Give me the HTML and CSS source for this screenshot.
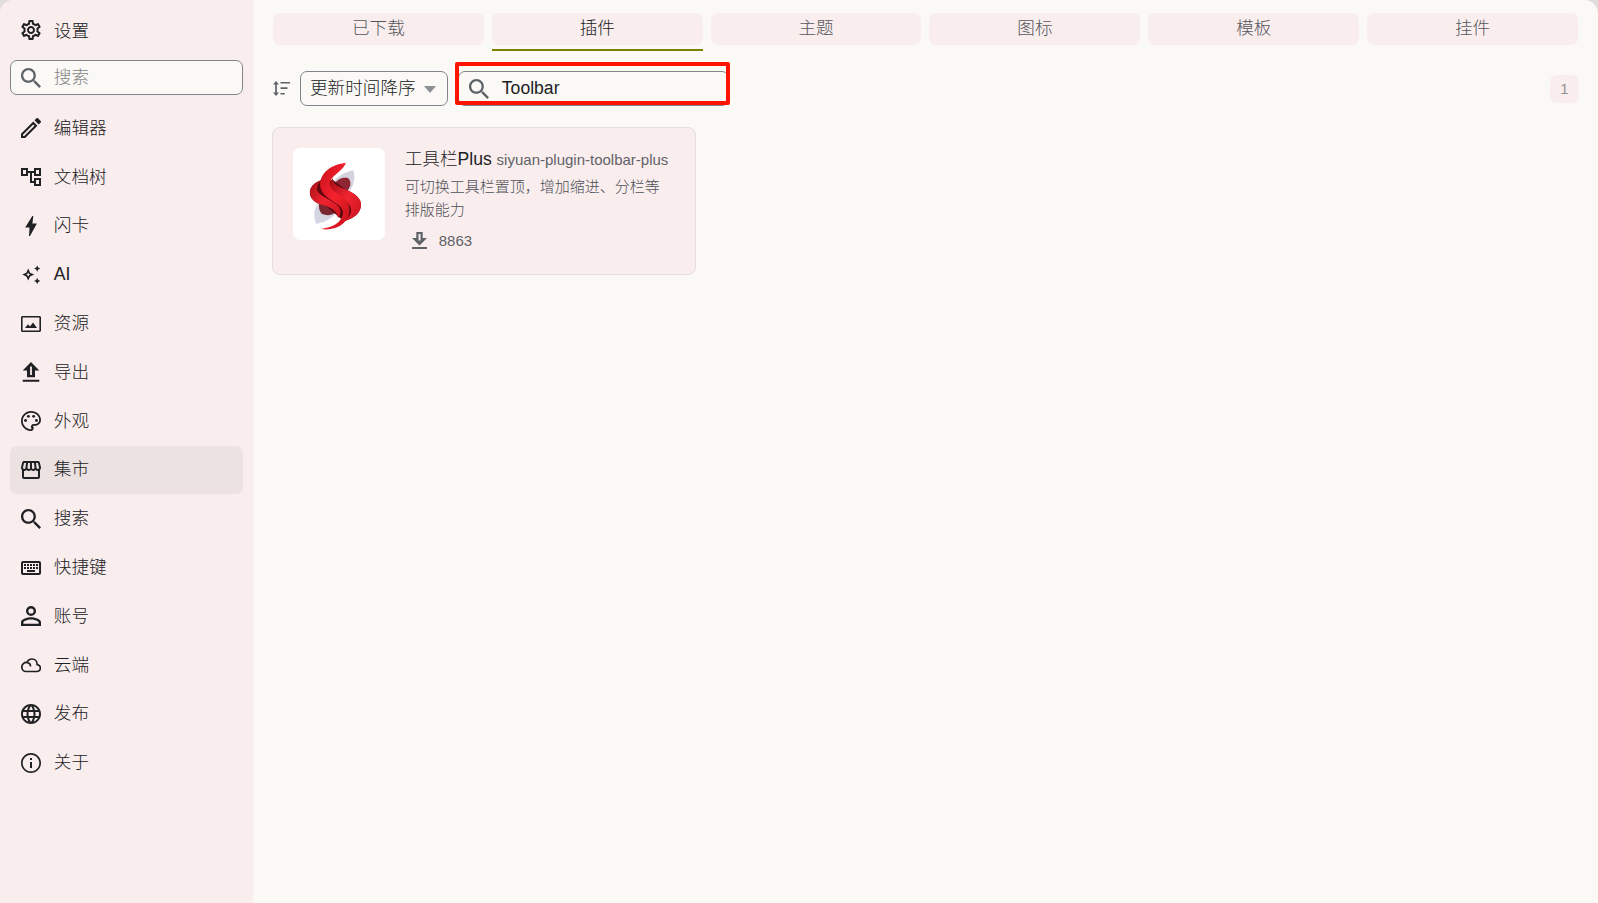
FILE: index.html
```html
<!DOCTYPE html>
<html lang="zh-CN">
<head>
  <meta charset="UTF-8">
  <meta name="viewport" content="width=device-width, initial-scale=1.0">
  <title>设置</title>
  <link rel="stylesheet" href="styles.css">
</head>
<body>
<div class="dialog">
  <aside class="sidebar">
    <div class="side-title">
      <svg class="icon" viewBox="2 2 20 20"><path d="M19.43 12.98c.04-.32.07-.64.07-.98 0-.34-.03-.66-.07-.98l2.11-1.65c.19-.15.24-.42.12-.64l-2-3.46c-.09-.16-.26-.25-.44-.25-.06 0-.12.01-.17.03l-2.49 1c-.52-.4-1.08-.73-1.69-.98l-.38-2.65C14.46 2.18 14.25 2 14 2h-4c-.25 0-.46.18-.49.42l-.38 2.65c-.61.25-1.17.59-1.69.98l-2.49-1c-.06-.02-.12-.03-.18-.03-.17 0-.34.09-.43.25l-2 3.46c-.13.22-.07.49.12.64l2.11 1.65c-.04.32-.07.65-.07.98 0 .33.03.66.07.98l-2.11 1.65c-.19.15-.24.42-.12.64l2 3.46c.09.16.26.25.44.25.06 0 .12-.01.17-.03l2.49-1c.52.4 1.08.73 1.69.98l.38 2.65c.03.24.24.42.49.42h4c.25 0 .46-.18.49-.42l.38-2.65c.61-.25 1.17-.59 1.69-.98l2.49 1c.06.02.12.03.18.03.17 0 .34-.09.43-.25l2-3.46c.12-.22.07-.49-.12-.64l-2.11-1.65zm-1.98-1.71c.04.31.05.52.05.73 0 .21-.02.43-.05.73l-.14 1.13.89.7 1.08.84-.7 1.21-1.27-.51-1.04-.42-.9.68c-.43.32-.84.56-1.25.73l-1.06.43-.16 1.13-.2 1.35h-1.4l-.19-1.35-.16-1.13-1.06-.43c-.43-.18-.83-.41-1.23-.71l-.91-.7-1.06.43-1.27.51-.7-1.21 1.08-.84.89-.7-.14-1.13c-.03-.31-.05-.54-.05-.74s.02-.43.05-.73l.14-1.13-.89-.7-1.08-.84.7-1.21 1.27.51 1.04.42.9-.68c.43-.32.84-.56 1.25-.73l1.06-.43.16-1.13.2-1.35h1.39l.19 1.35.16 1.13 1.06.43c.43.18.83.41 1.23.71l.91.7 1.06-.43 1.27-.51.7 1.21-1.07.85-.89.7.14 1.13zM12 8c-2.21 0-4 1.79-4 4s1.79 4 4 4 4-1.79 4-4-1.79-4-4-4zm0 6c-1.1 0-2-.9-2-2s.9-2 2-2 2 .9 2 2-.9 2-2 2z"/></svg>
      <span>设置</span>
    </div>
    <div class="search-box">
      <svg class="icon" viewBox="3 3 17.5 17.5"><path d="M15.5 14h-.79l-.28-.27C15.41 12.59 16 11.11 16 9.5 16 5.91 13.09 3 9.5 3S3 5.91 3 9.5 5.91 16 9.5 16c1.61 0 3.09-.59 4.23-1.57l.27.28v.79l5 4.99L20.49 19l-4.99-5zm-6 0C7.01 14 5 11.99 5 9.5S7.01 5 9.5 5 14 7.01 14 9.5 11.99 14 9.5 14z"/></svg>
      <span>搜索</span>
    </div>
    <ul class="menu">
      <li>
        <svg class="icon" viewBox="3 3 18 18"><path d="M3 17.25V21h3.75L17.81 9.94l-3.75-3.75L3 17.25zM5.92 19.3H4.8v-1.2l9.2-9.2 1.15 1.15-9.23 9.25zM20.71 5.63l-2.34-2.34c-.39-.39-1.02-.39-1.41 0l-1.83 1.83 3.75 3.75 1.83-1.83c.39-.39.39-1.02 0-1.41z"/></svg>
        <span>编辑器</span>
      </li>
      <li>
        <svg class="icon" viewBox="2 2 20 20"><path d="M22 11V3h-7v3H9V3H2v8h7V8h2v10h4v3h7v-8h-7v3h-2V8h2v3h7zM7 9H4V5h3v4zm10 6h3v4h-3v-4zm0-10h3v4h-3V5z"/></svg>
        <span>文档树</span>
      </li>
      <li>
        <svg class="icon" viewBox="2 2 20 20"><path d="M14.300 2h-1L6.200 13.500h4.300L10 22h1L17.900 9.600h-4.500z"/></svg>
        <span>闪卡</span>
      </li>
      <li>
        <svg class="icon" viewBox="0 0 20 20"><path fill-rule="evenodd" d="M7.200 3.600l1.900 4.100 4.100 1.900-4.100 1.900-1.900 4.100-1.900-4.100-4.100-1.900 4.100-1.900zm0 4l-.7 1.300-1.300.7 1.300.7.7 1.300.7-1.300 1.300-.7-1.300-.7zM16.200.4l1 2.200 2.200 1-2.200 1-1 2.200-1-2.200-2.200-1 2.200-1zM16.200 12.800l1 2.200 2.200 1-2.200 1-1 2.200-1-2.200-2.200-1 2.200-1z"/></svg>
        <span class="latin">AI</span>
      </li>
      <li>
        <svg class="icon" viewBox="0 0 20 20"><path fill-rule="evenodd" d="M18.500 2h-17C.7 2 0 2.700 0 3.500v13c0 .8.700 1.500 1.500 1.500h17c.8 0 1.500-.7 1.500-1.500v-13c0-.8-.7-1.500-1.500-1.500zm-.1 14.400H1.600V3.600h16.800zM4 14h12l-4-5.500-3 4-2-2.300z"/></svg>
        <span>资源</span>
      </li>
      <li>
        <svg class="icon" viewBox="0 0 20 20"><path fill-rule="evenodd" d="M6 15.200h8V8.500h4.300L10 0 1.700 8.500H6zM9.100 4.600h1.800v8.400H9.100zM1.700 17.700h16.600v2.100H1.700z"/></svg>
        <span>导出</span>
      </li>
      <li>
        <svg class="icon" viewBox="2.500 2.500 19 19"><path d="M12 21.500c-5.240 0-9.500-4.260-9.500-9.500S6.760 2.500 12 2.500s9.500 3.810 9.500 8.500c0 3.030-2.470 5.500-5.500 5.500h-1.500c-.5 0-.5.400-.4.700.9 1.500.3 4.300-2.100 4.300zM12 4.200c-4.300 0-7.800 3.500-7.800 7.800s3.500 7.800 7.800 7.800c.5 0 .6-.5.300-1-.9-1.800.2-4 2.200-4H16c2.100 0 3.800-1.700 3.800-3.800 0-3.750-3.500-6.800-7.800-6.800z"/><circle cx="6.800" cy="11.500" r="1.400"/><circle cx="9.500" cy="7.600" r="1.400"/><circle cx="14.500" cy="7.600" r="1.400"/><circle cx="17.200" cy="11.500" r="1.400"/></svg>
        <span>外观</span>
      </li>
      <li class="active">
        <svg class="icon" viewBox="2 2 20 20"><path d="M21.900 8.890l-1.050-4.370c-.22-.9-1-1.520-1.910-1.520H5.050c-.9 0-1.690.63-1.900 1.520L2.100 8.890c-.24 1.020-.02 2.060.62 2.880.08.11.19.19.28.290V19c0 1.100.9 2 2 2h14c1.100 0 2-.9 2-2v-6.940c.09-.09.2-.18.280-.28.640-.82.870-1.870.620-2.890zM18.910 4.990l1.050 4.370c.1.420.01.840-.25 1.170-.14.180-.44.470-.94.470-.61 0-1.140-.49-1.210-1.140L16.980 5l1.930-.01zM13 5h1.960l.54 4.520c.05.390-.07.780-.33 1.070-.22.260-.54.410-.95.410-.67 0-1.220-.59-1.220-1.310V5zM8.490 9.520L9.040 5H11v4.690c0 .72-.55 1.310-1.290 1.310-.34 0-.65-.15-.89-.41-.25-.29-.37-.68-.33-1.070zM4.040 9.360L5.050 5h1.970l-.58 4.860c-.08.650-.6 1.140-1.210 1.140-.49 0-.8-.29-.93-.47-.27-.32-.36-.75-.26-1.170zM5 19v-6.030c.08.010.15.030.23.030.87 0 1.660-.36 2.240-.95.6.600 1.400.95 2.310.95.870 0 1.650-.36 2.230-.93.590.570 1.390.930 2.290.930.840 0 1.640-.35 2.240-.95.580.590 1.370.950 2.240.950.080 0 .15-.02.230-.03V19H5z"/></svg>
        <span>集市</span>
      </li>
      <li>
        <svg class="icon" viewBox="3 3 17.5 17.5"><path d="M15.5 14h-.79l-.28-.27C15.41 12.59 16 11.11 16 9.5 16 5.91 13.09 3 9.5 3S3 5.91 3 9.5 5.91 16 9.5 16c1.61 0 3.09-.59 4.23-1.57l.27.28v.79l5 4.99L20.49 19l-4.99-5zm-6 0C7.01 14 5 11.99 5 9.5S7.01 5 9.5 5 14 7.01 14 9.5 11.99 14 9.5 14z"/></svg>
        <span>搜索</span>
      </li>
      <li>
        <svg class="icon" viewBox="2 2 20 20"><path d="M20 7v10H4V7h16m0-2H4c-1.100 0-2 .9-2 2v10c0 1.100.9 2 2 2h16c1.100 0 2-.9 2-2V7c0-1.100-.9-2-2-2zm-9 3h2v2h-2V8zm0 3h2v2h-2v-2zM8 8h2v2H8V8zm0 3h2v2H8v-2zm-3 0h2v2H5v-2zm0-3h2v2H5V8zm3 6h8v2H8v-2zm6-3h2v2h-2v-2zm0-3h2v2h-2V8zm3 3h2v2h-2v-2zm0-3h2v2h-2V8z"/></svg>
        <span>快捷键</span>
      </li>
      <li>
        <svg class="icon" viewBox="0 0 20 20"><path fill-rule="evenodd" d="M10 0a5 5 0 100 10 5 5 0 000-10zm0 2.400a2.600 2.600 0 110 5.200 2.600 2.600 0 010-5.200zM10 11.200c-3.300 0-10 1.600-10 5V20h20v-3.800c0-3.400-6.700-5-10-5zm7.600 6.500H2.400v-1.200c0-1 3.800-2.900 7.600-2.900s7.600 1.900 7.600 2.900z"/></svg>
        <span>账号</span>
      </li>
      <li>
        <svg class="icon line" viewBox="0 0 20 20"><path d="M5 16.500h10.800a3.400 3.400 0 00.4-6.800C16.200 6.300 14 4 11 4 8.600 4 6.800 5.200 6 7.500A4.500 4.500 0 00.8 12c0 2.600 1.800 4.500 4.200 4.500zM5.800 7.600c2 .1 3.700 1.600 3.700 3.900"/></svg>
        <span>云端</span>
      </li>
      <li>
        <svg class="icon" viewBox="2 2 20 20"><path d="M11.990 2C6.470 2 2 6.480 2 12s4.470 10 9.990 10C17.520 22 22 17.520 22 12S17.520 2 11.990 2zm6.930 6h-2.950c-.32-1.250-.78-2.450-1.380-3.560 1.840.63 3.370 1.910 4.330 3.560zM12 4.040c.83 1.200 1.480 2.530 1.910 3.960h-3.820c.43-1.430 1.080-2.760 1.910-3.960zM4.260 14C4.100 13.360 4 12.690 4 12s.1-1.360.26-2h3.380c-.08.66-.14 1.320-.14 2s.06 1.340.14 2H4.260zm.82 2h2.950c.32 1.250.78 2.450 1.380 3.560-1.840-.63-3.370-1.900-4.330-3.560zm2.950-8H5.080c.96-1.660 2.490-2.930 4.330-3.560C8.810 5.550 8.350 6.750 8.030 8zM12 19.960c-.83-1.200-1.480-2.530-1.910-3.960h3.820c-.43 1.430-1.080 2.760-1.910 3.960zM14.340 14H9.660c-.09-.66-.16-1.320-.16-2s.07-1.350.16-2h4.680c.09.65.16 1.320.16 2s-.07 1.340-.16 2zm.25 5.560c.6-1.110 1.060-2.310 1.380-3.560h2.950c-.96 1.650-2.490 2.930-4.330 3.560zM16.360 14c.08-.66.14-1.320.14-2s-.06-1.340-.14-2h3.380c.16.640.26 1.310.26 2s-.1 1.360-.26 2h-3.380z"/></svg>
        <span>发布</span>
      </li>
      <li>
        <svg class="icon" viewBox="2 2 20 20"><path d="M11 7h2v2h-2zm0 4h2v6h-2zm1-9C6.480 2 2 6.480 2 12s4.480 10 10 10 10-4.480 10-10S17.520 2 12 2zm0 18.300c-4.600 0-8.300-3.700-8.300-8.300S7.400 3.700 12 3.700s8.300 3.700 8.300 8.300-3.700 8.300-8.300 8.300z"/></svg>
        <span>关于</span>
      </li>
    </ul>
  </aside>

  <main class="content">
    <nav class="tabs">
      <div class="tab">已下载</div>
      <div class="tab current">插件</div>
      <div class="tab">主题</div>
      <div class="tab">图标</div>
      <div class="tab">模板</div>
      <div class="tab">挂件</div>
    </nav>

    <div class="toolbar">
      <svg class="sort-icon" viewBox="0 0 17 15"><path d="M2.200 3.600v7.800H0L3 15l3-3.600H3.900V3.600H6L3 0 0 3.600zM7.500.900H17v1.700H7.500zM7.500 6.300h7v1.700h-7zM7.500 11.900h4.200v1.700H7.500z"/></svg>
      <div class="select">
        <span>更新时间降序</span>
        <i class="arrow"></i>
      </div>
      <div class="keyword">
        <div class="search-box">
          <svg class="icon" viewBox="3 3 17.5 17.5"><path d="M15.5 14h-.79l-.28-.27C15.41 12.59 16 11.11 16 9.5 16 5.91 13.09 3 9.5 3S3 5.91 3 9.5 5.91 16 9.5 16c1.61 0 3.09-.59 4.23-1.57l.27.28v.79l5 4.99L20.49 19l-4.99-5zm-6 0C7.01 14 5 11.99 5 9.5S7.01 5 9.5 5 14 7.01 14 9.5 11.99 14 9.5 14z"/></svg>
          <span>Toolbar</span>
        </div>
        <div class="marker"></div>
      </div>
      <span class="counter">1</span>
    </div>

    <div class="card">
      <div class="logo">
        <svg viewBox="0 0 92 92">
          <defs>
            <linearGradient id="ribbon" x1="0" y1="0" x2="1" y2="1">
              <stop offset="0" stop-color="#c9101c"/>
              <stop offset=".5" stop-color="#f5222d"/>
              <stop offset="1" stop-color="#c20f1a"/>
            </linearGradient>
            <linearGradient id="side" x1="0" y1="0" x2="1" y2="1">
              <stop offset="0" stop-color="#a50d16"/>
              <stop offset=".5" stop-color="#f02430"/>
              <stop offset="1" stop-color="#c8141f"/>
            </linearGradient>
          </defs>
          <path fill="#d5d1dd" d="M38 38C43 28 51 25 60 22c3 7 1 16-5 23z"/>
          <path fill="#8d2632" d="M40 38c4-7 9-9 15-8 4 4 3 9-2 14z"/>
          <path fill="#d4d6e4" d="M26 54c-5 6-6 14-3 22 11-2 18-7 23-15z"/>
          <path fill="#7c2631" d="M27 52c-2 6-1 11 2 14 8 3 15 0 19-9z"/>
          <!-- shadow between the ribbons -->
          <path fill="#5e070c" d="M29 32c-8 2-13 8-12 14 1 7 8 10 16 12l14 12 5 3c9-3 15-8 16-15 0-8-6-13-15-16L40 32z"/>
          <!-- right lobe -->
          <path fill="url(#side)" d="M40 30c-1 6 6 9 14 12 9 4 15 9 14 16-1 8-7 12-16 15 7-7 8-12 3-18-6-6-17-10-18-17 0-3 1-6 3-8z"/>
          <!-- left lobe -->
          <path fill="url(#side)" d="M29 32c-8 2-13 8-12 14 1 7 8 10 16 12 8 3 11 6 12 12 4-5 3-10-2-14-8-6-19-9-19-15 0-4 2-7 5-9z"/>
          <!-- middle ribbon -->
          <path fill="url(#ribbon)" d="M53 15c-14 1-25 9-26 21 0 8 6 13 14 18 8 5 11 9 8 15-2 5-8 10-21 12 14 2 25-4 28-15 2-9-2-14-9-19-7-4-11-7-10-13 2-7 12-10 16-19z"/>
        </svg>
      </div>
      <div class="info">
        <div class="name">工具栏Plus <span>siyuan-plugin-toolbar-plus</span></div>
        <div class="desc">可切换工具栏置顶，增加缩进、分栏等排版能力</div>
        <div class="downloads">
          <svg viewBox="0 0 15 17"><path fill-rule="evenodd" d="M4.300 0h6.400v6H15l-7.500 7.500L0 6h4.300zm2.200 2v6.500h2V2zM0 15.100h15V17H0z"/></svg>
          <span>8863</span>
        </div>
      </div>
    </div>
  </main>
</div>
</body>
</html>
```

FILE: styles.css
```css
* {
  box-sizing: border-box;
}

body {
  margin: 0;
  height: 100vh;
  overflow: hidden;
  background: #e2dddd;
  color: #202124;
  font-family: "Liberation Sans", "Noto Sans CJK SC", sans-serif;
  font-size: 17.6px;
  font-weight: 300;
}

.dialog {
  display: flex;
  height: 100vh;
  border-radius: 14px 14px 0 0;
  background: #faf9f5;
  overflow: hidden;
}

.icon {
  width: 20px;
  height: 20px;
  flex-shrink: 0;
  fill: #202124;
}

.icon.line {
  fill: none;
  stroke: #202124;
  stroke-width: 1.7;
}

/* sidebar */
.sidebar {
  width: 253px;
  padding: 10px 10px 0;
  background: #faeded;
}

.side-title {
  display: flex;
  align-items: center;
  gap: 12.8px;
  height: 40px;
  padding-left: 11px;
}

.side-title span {
  margin-top: -2px;
}

.search-box {
  display: flex;
  align-items: center;
  gap: 12.8px;
  height: 35px;
  padding-left: 10px;
  border: 1px solid #80848a;
  border-radius: 7px;
  background: #faf9f5;
}

.search-box .icon {
  fill: #5f6368;
}

.sidebar .search-box {
  margin-top: 10px;
  color: #858585;
}

.sidebar .search-box span {
  margin-top: -4px;
}

.menu {
  list-style: none;
  margin: 9px 0 0;
  padding: 0;
}

.menu li {
  display: flex;
  align-items: center;
  gap: 12.8px;
  height: 48.8px;
  padding-left: 11px;
  border-radius: 7px;
}

.menu li span {
  margin-top: -4px;
}

.menu li .latin {
  margin-top: -1px;
}

.menu .active {
  background: #ece2e2;
}

/* content */
.content {
  flex: 1;
  padding: 13px 20px 0;
}

.tabs {
  display: flex;
  gap: 8px;
}

.tab {
  flex: 1;
  height: 32px;
  line-height: 31px;
  border-radius: 7px;
  background: #faeded;
  color: #54585d;
  text-align: center;
}

.tab.current {
  position: relative;
  color: #202124;
}

.tab.current::after {
  content: "";
  position: absolute;
  left: 0;
  right: 0;
  top: 36px;
  height: 2px;
  background: #808000;
}

.toolbar {
  display: flex;
  align-items: center;
  height: 35px;
  margin-top: 26px;
}

.sort-icon {
  width: 17px;
  height: 15px;
  fill: #5f6368;
}

.select {
  display: flex;
  align-items: center;
  justify-content: space-between;
  width: 148px;
  height: 35px;
  margin-left: 10px;
  padding: 0 11px 0 9px;
  border: 1px solid #80848a;
  border-radius: 7px;
}

.select span {
  margin-top: -4px;
}

.arrow {
  border: 6px solid transparent;
  border-top: 7px solid #8d9094;
  border-bottom: none;
  margin-top: 2px;
}

.keyword {
  position: relative;
  width: 271px;
  margin-left: 10px;
}

/* red frame over the keyword input */
.marker {
  position: absolute;
  left: -3px;
  top: -9px;
  width: 275px;
  height: 43px;
  border: 4px solid #ff1200;
  border-radius: 2px;
}

.counter {
  width: 29px;
  height: 28px;
  margin-left: auto;
  margin-right: -1px;
  border-radius: 7px;
  background: #faeded;
  color: #929292;
  font-size: 15px;
  line-height: 28px;
  text-align: center;
}

.card {
  display: flex;
  gap: 20px;
  width: 424px;
  height: 148px;
  margin: 21px 0 0 -1px;
  padding: 20px;
  border: 1px solid #e4dedc;
  border-radius: 8px;
  background: #faeded;
}

.logo {
  width: 92px;
  height: 92px;
  border-radius: 7px;
  background: #fff;
}

.info {
  width: 256px;
  margin-left: -0.3px;
  color: #5f6368;
  font-size: 15px;
}

.name {
  height: 27px;
  line-height: 22px;
  color: #202124;
  font-size: 17.6px;
  white-space: nowrap;
}

.name span {
  color: #5f6368;
  font-size: 15px;
}

.desc {
  width: 265px;
  line-height: 23px;
  color: #4d5156;
}

.downloads {
  display: flex;
  align-items: center;
  gap: 12px;
  margin-top: 11px;
  padding-left: 7px;
}

.downloads svg {
  width: 15px;
  height: 17px;
  fill: #5f6368;
}
```
